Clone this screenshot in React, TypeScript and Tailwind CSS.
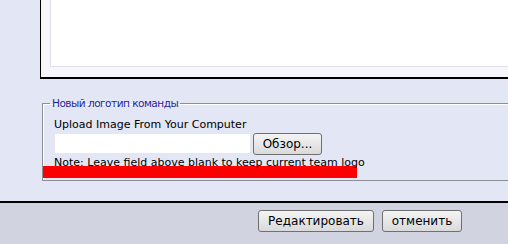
export default function App() {
  const font = { fontFamily: '"DejaVu Sans", Verdana, sans-serif' };
  return (
    <div
      className="w-[508px] h-[244px] overflow-hidden bg-[#e3e6f4] flex flex-col"
      style={font}
    >
      <div className="h-[201px] shrink-0">
        {/* text area box, top cut off */}
        <div className="ml-[40px] h-[79px] border-l border-b-2 border-black bg-[#f6f6fb] pl-[9px] pb-[10px]">
          <div className="h-full border-l border-b border-[#e0e0ec] bg-white" />
        </div>

        <fieldset className="ml-[42px] mt-[17px] w-[520px] border border-[#8e8e96] shadow-[inset_1px_1px_0_#ffffff] pl-[11px] pr-0 pt-[8px] pb-[2px] m-0">
          <legend className="-ml-[4px] px-[2px] text-[10.5px] tracking-[-0.5px] leading-[14px] text-[#24249a]">
            Новый логотип команды
          </legend>
          <div className="text-[11px] leading-[14px] text-black">
            Upload Image From Your Computer
          </div>
          <div className="mt-[1px] flex items-start gap-[2px]">
            <input
              type="text"
              className="w-[197px] h-[21px] bg-white border border-[#e6e6ee] outline-none"
            />
            <button className="h-[22px] w-[69px] rounded-[3px] border border-[#707070] bg-gradient-to-b from-[#f4f4f4] to-[#dadada] text-[12px] text-black leading-none">
              Обзор...
            </button>
          </div>
          <div className="mt-[1px] text-[11px] leading-[14px] text-black">
            Note: Leave field above blank to keep current team logo
          </div>
          <div className="-ml-[11px] -mt-[4px] w-[314px] h-[12px] bg-[#fd0000]" />
        </fieldset>
      </div>

      <div className="flex-1 border-t-2 border-black bg-[#d1d3e1] flex justify-end items-start pt-[7px] pr-[46px] gap-[8px]">
        <button className="h-[22px] w-[116px] rounded-[3px] border border-[#707070] bg-gradient-to-b from-[#f4f4f4] to-[#dadada] text-[12px] text-black leading-none">
          Редактировать
        </button>
        <button className="h-[22px] w-[80px] rounded-[3px] border border-[#707070] bg-gradient-to-b from-[#f4f4f4] to-[#dadada] text-[12px] text-black leading-none">
          отменить
        </button>
      </div>
    </div>
  );
}
